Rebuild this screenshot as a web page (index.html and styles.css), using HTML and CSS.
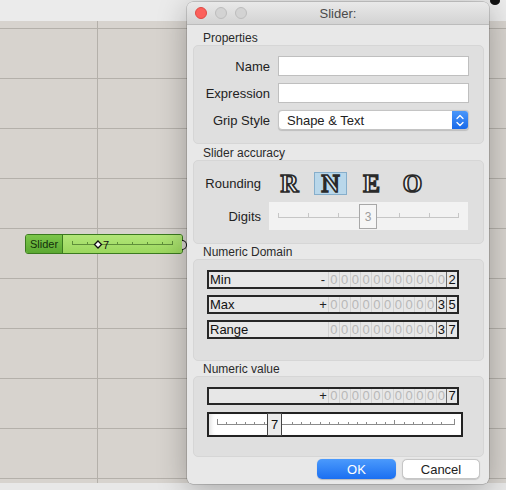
FILE: index.html
```html
<!DOCTYPE html>
<html>
<head>
<meta charset="utf-8">
<title>Slider</title>
<link rel="stylesheet" href="styles.css">
</head>
<body>
<div class="screen">
  <div class="topband"><span class="blob"></span></div>
  <div class="canvas">
    <div class="gh-slider">
      <div class="gh-name">Slider</div>
      <div class="gh-body">
        <svg class="gh-track" width="119" height="18" viewBox="0 0 119 18">
          <line x1="9" y1="9.5" x2="110" y2="9.5" stroke="#5f8f3a" stroke-width="1"/>
          <g stroke="#5f8f3a" stroke-width="1">
            <line x1="9.5" y1="6" x2="9.5" y2="9.5"/>
            <line x1="24.5" y1="7" x2="24.5" y2="9.5"/>
            <line x1="54.5" y1="7" x2="54.5" y2="9.5"/>
            <line x1="69.5" y1="7" x2="69.5" y2="9.5"/>
            <line x1="84.5" y1="7" x2="84.5" y2="9.5"/>
            <line x1="99.5" y1="7" x2="99.5" y2="9.5"/>
            <line x1="109.5" y1="6" x2="109.5" y2="9.5"/>
          </g>
          <polygon points="35,6 38.5,9.5 35,13 31.5,9.5" fill="#fff" stroke="#111" stroke-width="1.3"/>
          <text x="40" y="13.5" font-family="Liberation Sans, sans-serif" font-size="11" fill="#111">7</text>
        </svg>
      </div>
      <span class="gh-out"></span>
    </div>
  </div>
  <div class="bottomband"></div>

  <div class="dialog">
    <div class="titlebar">
      <div class="lights">
        <span class="light red"></span>
        <span class="light grey"></span>
        <span class="light grey"></span>
      </div>
      <div class="title">Slider:</div>
      <div></div>
    </div>

    <div class="content">
      <div class="sec-label first">Properties</div>
      <div class="box box-props">
        <div class="form-row">
          <label class="lbl">Name</label>
          <div class="field"></div>
        </div>
        <div class="form-row">
          <label class="lbl">Expression</label>
          <div class="field"></div>
        </div>
        <div class="form-row">
          <label class="lbl">Grip Style</label>
          <div class="popup">
            <span class="popup-text">Shape &amp; Text</span>
            <span class="stepper">
              <svg width="16" height="19" viewBox="0 0 16 19">
                <polyline points="5,7.5 8,4.5 11,7.5" fill="none" stroke="#fff" stroke-width="1.3" stroke-linecap="round" stroke-linejoin="round"/>
                <polyline points="5,11.5 8,14.5 11,11.5" fill="none" stroke="#fff" stroke-width="1.3" stroke-linecap="round" stroke-linejoin="round"/>
              </svg>
            </span>
          </div>
        </div>
      </div>

      <div class="sec-label">Slider accuracy</div>
      <div class="box box-acc">
        <div class="acc-row">
          <span class="lbl">Rounding</span>
          <div class="letters">
            <span class="letter">R</span>
            <span class="letter on">N</span>
            <span class="letter">E</span>
            <span class="letter">O</span>
          </div>
        </div>
        <div class="acc-row">
          <span class="lbl">Digits</span>
          <div class="digits-slider">
            <svg width="199" height="28" viewBox="0 0 199 28">
              <line x1="9" y1="15.5" x2="190" y2="15.5" stroke="#c6c6c6"/>
              <g stroke="#c6c6c6">
                <line x1="9.5" y1="11" x2="9.5" y2="15"/>
                <line x1="39.5" y1="11" x2="39.5" y2="15"/>
                <line x1="69.5" y1="11" x2="69.5" y2="15"/>
                <line x1="130.5" y1="11" x2="130.5" y2="15"/>
                <line x1="160.5" y1="11" x2="160.5" y2="15"/>
                <line x1="189.5" y1="11" x2="189.5" y2="15"/>
              </g>
            </svg>
            <span class="knob-digits">3</span>
          </div>
        </div>
      </div>

      <div class="sec-label tight">Numeric Domain</div>
      <div class="box box-domain">
        <div class="num-row">
          <span class="num-lbl">Min</span>
          <span class="sign">-</span>
          <span class="d">0</span><span class="d">0</span><span class="d">0</span><span class="d">0</span><span class="d">0</span><span class="d">0</span><span class="d">0</span><span class="d">0</span><span class="d">0</span><span class="d">0</span><span class="d">0</span><span class="d sig">2</span>
        </div>
        <div class="num-row">
          <span class="num-lbl">Max</span>
          <span class="sign">+</span>
          <span class="d">0</span><span class="d">0</span><span class="d">0</span><span class="d">0</span><span class="d">0</span><span class="d">0</span><span class="d">0</span><span class="d">0</span><span class="d">0</span><span class="d">0</span><span class="d sig">3</span><span class="d sig">5</span>
        </div>
        <div class="num-row">
          <span class="num-lbl">Range</span>
          <span class="sign"></span>
          <span class="d">0</span><span class="d">0</span><span class="d">0</span><span class="d">0</span><span class="d">0</span><span class="d">0</span><span class="d">0</span><span class="d">0</span><span class="d">0</span><span class="d">0</span><span class="d sig">3</span><span class="d sig">7</span>
        </div>
      </div>

      <div class="sec-label tight">Numeric value</div>
      <div class="box box-value">
        <div class="num-row value-row">
          <span class="num-lbl"></span>
          <span class="sign">+</span>
          <span class="d">0</span><span class="d">0</span><span class="d">0</span><span class="d">0</span><span class="d">0</span><span class="d">0</span><span class="d">0</span><span class="d">0</span><span class="d">0</span><span class="d">0</span><span class="d">0</span><span class="d sig">7</span>
        </div>
        <div class="value-slider">
          <svg width="252" height="21" viewBox="0 0 252 21">
            <line x1="8" y1="10.5" x2="246" y2="10.5" stroke="#8a8a8a"/>
            <g stroke="#8a8a8a">
              <line x1="8.5" y1="5" x2="8.5" y2="10.5"/>
              <line x1="17.5" y1="8" x2="17.5" y2="10.5"/>
              <line x1="27.5" y1="8" x2="27.5" y2="10.5"/>
              <line x1="36.5" y1="8" x2="36.5" y2="10.5"/>
              <line x1="45.5" y1="8" x2="45.5" y2="10.5"/>
              <line x1="55.5" y1="8" x2="55.5" y2="10.5"/>
              <line x1="83.5" y1="8" x2="83.5" y2="10.5"/>
              <line x1="92.5" y1="8" x2="92.5" y2="10.5"/>
              <line x1="101.5" y1="8" x2="101.5" y2="10.5"/>
              <line x1="111.5" y1="8" x2="111.5" y2="10.5"/>
              <line x1="120.5" y1="8" x2="120.5" y2="10.5"/>
              <line x1="129.5" y1="8" x2="129.5" y2="10.5"/>
              <line x1="139.5" y1="8" x2="139.5" y2="10.5"/>
              <line x1="148.5" y1="8" x2="148.5" y2="10.5"/>
              <line x1="157.5" y1="8" x2="157.5" y2="10.5"/>
              <line x1="167.5" y1="8" x2="167.5" y2="10.5"/>
              <line x1="176.5" y1="8" x2="176.5" y2="10.5"/>
              <line x1="185.5" y1="6" x2="185.5" y2="10.5"/>
              <line x1="195.5" y1="8" x2="195.5" y2="10.5"/>
              <line x1="204.5" y1="8" x2="204.5" y2="10.5"/>
              <line x1="213.5" y1="8" x2="213.5" y2="10.5"/>
              <line x1="223.5" y1="8" x2="223.5" y2="10.5"/>
              <line x1="232.5" y1="8" x2="232.5" y2="10.5"/>
              <line x1="245.5" y1="5" x2="245.5" y2="10.5"/>
            </g>
          </svg>
          <span class="knob-value">7</span>
        </div>
      </div>

      <div class="buttons">
        <button class="btn ok">OK</button>
        <button class="btn cancel">Cancel</button>
      </div>
    </div>
  </div>
</div>
</body>
</html>
```

FILE: styles.css
```css
html, body {
  margin: 0;
  padding: 0;
}
body {
  width: 506px;
  height: 490px;
  overflow: hidden;
  font-family: "Liberation Sans", Arial, sans-serif;
  color: #222;
}
.screen {
  position: relative;
  width: 506px;
  height: 490px;
  display: flex;
  flex-direction: column;
  background: #e8e8e8;
}
.topband {
  height: 21px;
  flex: none;
  background: #ebebeb;
  position: relative;
}
.blob {
  position: absolute;
  right: 6px;
  top: -3px;
  width: 10px;
  height: 8px;
  border-radius: 50%;
  background: #111;
}
.canvas {
  flex: 1;
  position: relative;
  background-color: #d7d3ce;
  background-image:
    linear-gradient(to right, transparent 97px, #b4b0aa 97px, #b4b0aa 98px, transparent 98px),
    repeating-linear-gradient(to bottom, transparent 0, transparent 7px, #b4b0aa 7px, #b4b0aa 8px, transparent 8px, transparent 50px);
}
.bottomband {
  height: 7px;
  flex: none;
  background: #e8e8e8;
}

/* grasshopper slider on canvas */
.gh-slider {
  position: absolute;
  left: 25px;
  top: 213px;
  width: 156px;
  height: 18px;
  display: flex;
  border: 1px solid #3b7a1f;
  border-radius: 3px;
  background: #a5df6a;
}
.gh-name {
  width: 36px;
  flex: none;
  display: flex;
  align-items: center;
  justify-content: center;
  font-size: 11px;
  color: #13300a;
  background: linear-gradient(#7bc64a, #5ba832);
  border-right: 1px solid #3b7a1f;
  border-radius: 2px 0 0 2px;
}
.gh-body {
  flex: 1;
  background: linear-gradient(#b2e678, #9bd75e);
  border-radius: 0 2px 2px 0;
}
.gh-track {
  display: block;
}
.gh-out {
  position: absolute;
  right: -5px;
  top: 5px;
  width: 4px;
  height: 8px;
  border: 1.5px solid #111;
  border-left: none;
  border-radius: 0 5px 5px 0;
  background: #d7d3ce;
}

/* dialog window */
.dialog {
  position: absolute;
  left: 187px;
  top: 2px;
  width: 302px;
  height: 482px;
  background: #e8e8e8;
  border-radius: 6px;
  box-shadow: 0 0 0 0.5px rgba(0,0,0,0.28), 0 6px 30px rgba(0,0,0,0.28);
  display: flex;
  flex-direction: column;
}
.titlebar {
  height: 22px;
  flex: none;
  display: grid;
  grid-template-columns: 1fr auto 1fr;
  align-items: center;
  background: linear-gradient(#e9e9e9, #d3d3d3);
  border-bottom: 1px solid #bcbcbc;
  border-radius: 6px 6px 0 0;
}
.lights {
  display: flex;
  gap: 8px;
  padding-left: 8px;
}
.light {
  width: 12px;
  height: 12px;
  border-radius: 50%;
  box-sizing: border-box;
}
.light.red {
  background: #fc605b;
  border: 0.5px solid #de4a44;
}
.light.grey {
  background: #d3d3d3;
  border: 0.5px solid #bdbdbd;
}
.title {
  font-size: 13px;
  color: #4a4a4a;
}
.content {
  flex: 1;
  display: flex;
  flex-direction: column;
  padding: 0 5px 0 6px;
}
.sec-label {
  font-size: 12px;
  line-height: 14px;
  padding-left: 10px;
  padding-top: 2px;
  color: #2a2a2a;
}
.sec-label.first {
  padding-top: 6px;
}
.sec-label.tight {
  padding-top: 1px;
}
.box {
  background: #dfdfdf;
  border: 1px solid #d6d6d6;
  border-radius: 5px;
  box-sizing: border-box;
}
.box-props {
  height: 99px;
  padding-top: 10px;
  display: flex;
  flex-direction: column;
  gap: 7px;
}
.form-row {
  display: grid;
  grid-template-columns: 76px 191px;
  column-gap: 8px;
  align-items: center;
  height: 20px;
}
.lbl {
  text-align: right;
  font-size: 13px;
  color: #222;
}
.field {
  height: 20px;
  box-sizing: border-box;
  background: #fff;
  border: 1px solid #bfbfbf;
}
.popup {
  height: 20px;
  box-sizing: border-box;
  background: #fff;
  border: 0.5px solid #c4c4c4;
  border-radius: 4px;
  box-shadow: 0 0.5px 1px rgba(0,0,0,0.15);
  display: flex;
  align-items: center;
  justify-content: space-between;
  overflow: hidden;
}
.popup-text {
  padding-left: 8px;
  font-size: 13px;
  color: #222;
}
.stepper {
  width: 16px;
  height: 100%;
  background: linear-gradient(#4a97fa, #1769ea);
  display: flex;
  align-items: center;
  justify-content: center;
}
.stepper svg {
  display: block;
}

.box-acc {
  height: 84px;
  padding-top: 11px;
  display: flex;
  flex-direction: column;
  gap: 7px;
}
.acc-row {
  display: grid;
  grid-template-columns: 67px 199px;
  column-gap: 8px;
  align-items: center;
}
.letters {
  display: flex;
  gap: 8px;
  padding-left: 4px;
}
.letter {
  width: 33px;
  height: 23px;
  box-sizing: border-box;
  display: flex;
  align-items: center;
  justify-content: center;
  font-family: "Liberation Serif", "Times New Roman", serif;
  font-weight: bold;
  font-size: 25px;
  color: #f4f4f4;
  -webkit-text-stroke: 1.7px #2a2a2a;
}
.letter.on {
  background: #b9d7ea;
  border: 1px solid #86aecb;
}
.letter.on {
  color: #d8e9f4;
}
.digits-slider {
  position: relative;
  height: 28px;
  background: #f2f2f2;
}
.digits-slider svg {
  display: block;
}
.knob-digits {
  position: absolute;
  left: 90px;
  top: 2px;
  width: 18px;
  height: 25px;
  box-sizing: border-box;
  border: 1px solid #a8a8a8;
  background: #f6f6f6;
  color: #9c9c9c;
  font-size: 12px;
  display: flex;
  align-items: center;
  justify-content: center;
}

.box-domain {
  height: 102px;
  padding: 10px 0 0 13px;
  display: flex;
  flex-direction: column;
  gap: 6px;
}
.num-row {
  width: 252px;
  height: 19px;
  box-sizing: border-box;
  border: 2px solid #262626;
  background: #e7e7e7;
  display: flex;
  align-items: stretch;
  font-size: 13px;
}
.num-lbl {
  flex: 1;
  padding-left: 1px;
  line-height: 15px;
  color: #111;
}
.sign {
  width: 10px;
  text-align: center;
  line-height: 15px;
  color: #222;
}
.d {
  width: 10.75px;
  box-sizing: border-box;
  border-left: 1px solid #d2d2d2;
  text-align: center;
  line-height: 15px;
  color: #b8b8b8;
}
.d.sig {
  color: #111;
  border-left: 1px solid #6a6a6a;
}

.box-value {
  height: 81px;
  padding: 10px 0 0 13px;
  display: flex;
  flex-direction: column;
  gap: 7px;
}
.value-row {
  height: 18px;
}
.value-row .num-lbl,
.value-row .sign,
.value-row .d {
  line-height: 14px;
}
.value-slider {
  position: relative;
  width: 256px;
  height: 25px;
  box-sizing: border-box;
  border: 2px solid #222;
  background: #fff;
  box-shadow: inset 4px 0 4px -2px rgba(0,0,0,0.12);
}
.value-slider svg {
  display: block;
}
.knob-value {
  position: absolute;
  left: 58px;
  top: -1px;
  width: 15px;
  height: 23px;
  box-sizing: border-box;
  border: 1.5px solid #444;
  background: #ebebeb;
  color: #111;
  font-size: 13px;
  display: flex;
  align-items: center;
  justify-content: center;
}

.buttons {
  display: flex;
  justify-content: flex-end;
  gap: 6px;
  padding: 2px 4px 0 0;
}
.btn {
  height: 20px;
  border-radius: 5px;
  font-family: "Liberation Sans", Arial, sans-serif;
  font-size: 13px;
  padding: 0;
  box-sizing: border-box;
}
.btn.ok {
  width: 79px;
  color: #fff;
  border: none;
  background: linear-gradient(#4b9afc, #1b6ff1);
  box-shadow: 0 0.5px 1px rgba(0,0,0,0.2);
}
.btn.cancel {
  width: 78px;
  color: #222;
  background: #fff;
  border: 0.5px solid #c6c6c6;
  box-shadow: 0 0.5px 1px rgba(0,0,0,0.15);
}
```
